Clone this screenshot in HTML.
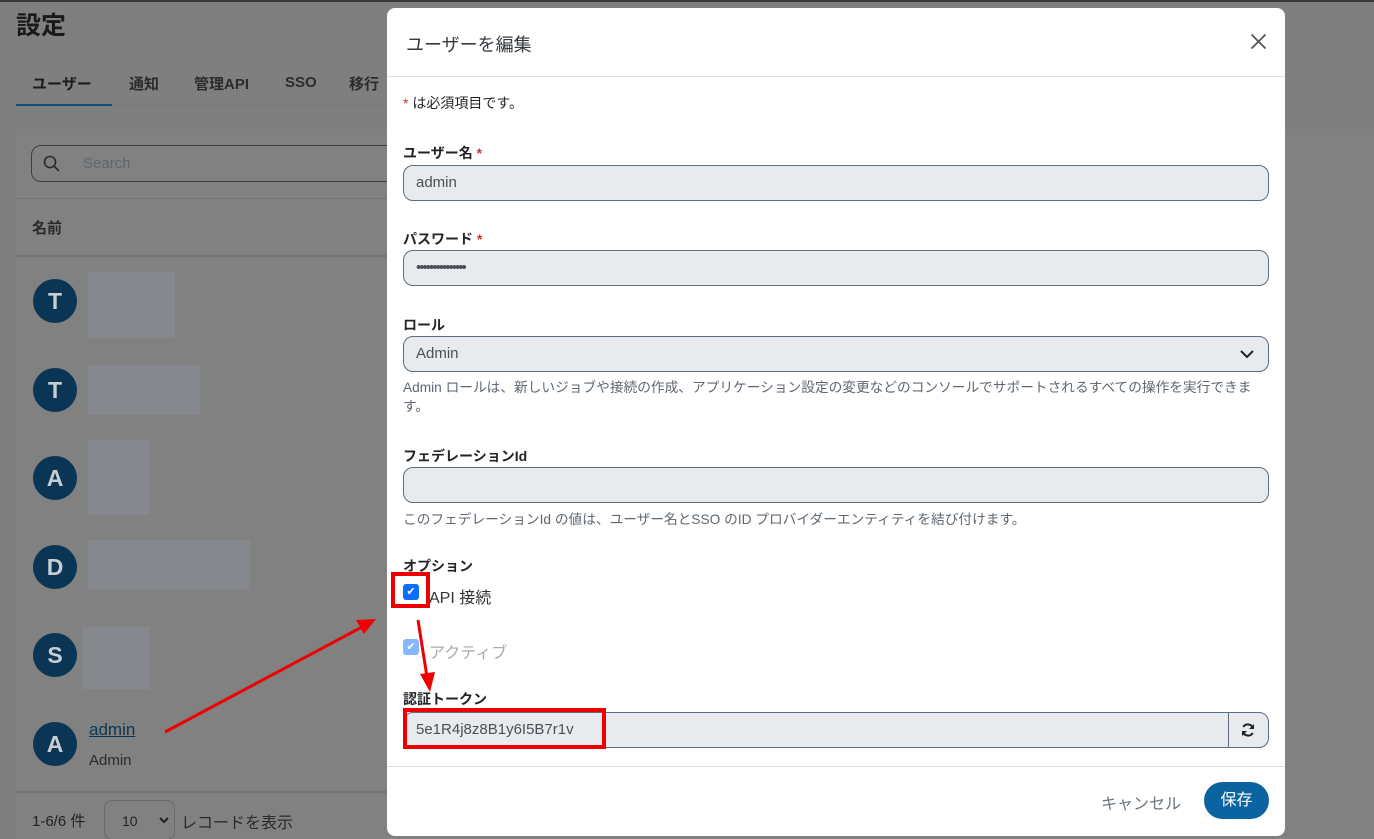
<!DOCTYPE html>
<html><head><meta charset="utf-8"><style>
*{box-sizing:border-box;margin:0;padding:0}
html,body{width:1374px;height:839px;overflow:hidden}
body{background:#7f7f7f;font-family:"Liberation Sans","Noto Sans CJK JP",sans-serif;position:relative;color:#212529}
.abs{position:absolute}
.card{left:16px;top:129px;width:1400px;height:720px;background:#818181;border-radius:8px}
.av{position:absolute;left:33px;width:44px;height:44px;border-radius:50%;background:#0b3554;color:#c9ccd0;font-weight:bold;font-size:23px;text-align:center;line-height:44px}
.blur{position:absolute;background:#85888c}
.modal{left:387px;top:8px;width:898px;height:828px;background:#fff;border-radius:8px}
.lbl{position:absolute;left:16px;font-size:14px;font-weight:bold;color:#212529}
.inp{position:absolute;left:16px;width:866px;height:36px;background:#e8ebee;border:1px solid #5d6d7c;border-radius:10px;font-size:15px;color:#495057;padding-left:12px;line-height:34px}
.help{position:absolute;left:16px;font-size:13.7px;color:#5f6870;line-height:19px;white-space:nowrap}
.req{color:#d0312d}
.cb{position:absolute;width:16px;height:16px;border-radius:3px;background:#0d6efd;color:#fff;font-size:11px;text-align:center;line-height:16px}
</style></head><body>
<div class="abs" style="left:0;top:0;width:1374px;height:2px;background:#3a3a3a"></div>
<div class="abs" style="left:16px;top:6px;font-size:25px;font-weight:bold;color:#1a1a1a">設定</div>
<div class="abs" style="left:32px;top:73px;font-size:15px;font-weight:bold;color:#1c1c1c">ユーザー</div>
<div class="abs" style="left:129px;top:73px;font-size:15px;font-weight:bold;color:#2c2c2c">通知</div>
<div class="abs" style="left:194px;top:73px;font-size:15px;font-weight:bold;color:#2c2c2c">管理API</div>
<div class="abs" style="left:285px;top:74px;font-size:15px;font-weight:bold;color:#2c2c2c">SSO</div>
<div class="abs" style="left:349px;top:73px;font-size:15px;font-weight:bold;color:#2c2c2c">移行</div>
<div class="abs" style="left:16px;top:105px;width:380px;height:1px;background:#777"></div>
<div class="abs" style="left:16px;top:104px;width:96px;height:2px;background:#0e4f7d"></div>
<div class="abs card"></div>
<div class="abs" style="left:31px;top:145px;width:370px;height:37px;border:1px solid #3e3e3e;border-radius:10px"></div>
<svg class="abs" style="left:43px;top:155px" width="18" height="18" viewBox="0 0 18 18"><circle cx="7" cy="7" r="5.5" fill="none" stroke="#2a2a2a" stroke-width="1.6"/><line x1="11" y1="11" x2="16" y2="16" stroke="#2a2a2a" stroke-width="1.6"/></svg>
<div class="abs" style="left:83px;top:155px;font-size:15px;color:#5f666c">Search</div>
<div class="abs" style="left:16px;top:198px;width:380px;height:1px;background:#747474"></div>
<div class="abs" style="left:32px;top:217px;font-size:15px;font-weight:bold;color:#2a2a2a">名前</div>
<div class="abs" style="left:16px;top:255px;width:380px;height:2px;background:#747474"></div>
<div class="av" style="top:279px">T</div><div class="blur" style="left:88px;top:272px;width:87px;height:66px"></div>
<div class="av" style="top:368px">T</div><div class="blur" style="left:88px;top:365px;width:112px;height:50px"></div>
<div class="av" style="top:456px">A</div><div class="blur" style="left:88px;top:440px;width:62px;height:75px"></div>
<div class="av" style="top:545px">D</div><div class="blur" style="left:88px;top:540px;width:162px;height:50px"></div>
<div class="av" style="top:633px">S</div><div class="blur" style="left:83px;top:627px;width:67px;height:62px"></div>
<div class="av" style="top:722px">A</div>
<div class="abs" style="left:89px;top:720px;font-size:17px;color:#0b3554;text-decoration:underline">admin</div>
<div class="abs" style="left:89px;top:752px;font-size:15px;color:#2a2a2a">Admin</div>
<div class="abs" style="left:16px;top:791px;width:380px;height:2px;background:#747474"></div>
<div class="abs" style="left:32px;top:810px;font-size:15px;color:#222">1-6/6 件</div>
<div class="abs" style="left:104px;top:800px;width:71px;height:40px;border:1px solid #6a6a6a;border-radius:8px;font-size:14px;color:#222;padding:12px 0 0 17px">10<svg style="position:absolute;left:54px;top:16px" width="10" height="7" viewBox="0 0 10 7"><path d="M1 1L5 5L9 1" fill="none" stroke="#222" stroke-width="2"/></svg></div>
<div class="abs" style="left:181px;top:809px;font-size:16px;color:#2a2a2a">レコードを表示</div>

<div class="abs modal">
 <div class="abs" style="left:19px;top:23px;font-size:18px;color:#343a40">ユーザーを編集</div>
 <svg class="abs" style="left:863px;top:25px" width="17" height="17" viewBox="0 0 17 17"><path d="M1.5 1.5L15.5 15.5M15.5 1.5L1.5 15.5" stroke="#555" stroke-width="1.8"/></svg>
 <div class="abs" style="left:0;top:68px;width:898px;height:1px;background:#dee2e6"></div>
 <div class="help" style="top:86px;font-size:14px;color:#212529"><span class="req">*</span> は必須項目です。</div>
 <div class="lbl" style="top:135px">ユーザー名 <span class="req">*</span></div>
 <div class="inp" style="top:157px">admin</div>
 <div class="lbl" style="top:221px">パスワード <span class="req">*</span></div>
 <div class="inp" style="top:242px;font-size:15px;letter-spacing:-2px">•••••••••••••••</div>
 <div class="lbl" style="top:307px">ロール</div>
 <div class="inp" style="top:328px">Admin<svg style="position:absolute;right:14px;top:12px" width="14" height="10" viewBox="0 0 14 10"><path d="M1 2L7 8L13 2" fill="none" stroke="#222" stroke-width="2"/></svg></div>
 <div class="help" style="top:370px">Admin ロールは、新しいジョブや接続の作成、アプリケーション設定の変更などのコンソールでサポートされるすべての操作を実行できま<br>す。</div>
 <div class="lbl" style="top:438px">フェデレーションId</div>
 <div class="inp" style="top:459px"></div>
 <div class="help" style="top:502px">このフェデレーションId の値は、ユーザー名とSSO のID プロバイダーエンティティを結び付けます。</div>
 <div class="lbl" style="top:548px">オプション</div>
 <div class="cb" style="left:16px;top:576px">✔</div>
 <div class="abs" style="left:42px;top:576px;font-size:16px;color:#333">API 接続</div>
 <div class="cb" style="left:16px;top:631px;background:#86b7fe">✔</div>
 <div class="abs" style="left:42px;top:631px;font-size:16px;color:#aaa">アクティブ</div>
 <div class="lbl" style="top:681px">認証トークン</div>
 <div class="inp" style="top:704px;border-radius:10px">5e1R4j8z8B1y6I5B7r1v<div style="position:absolute;left:824px;top:0;width:1px;height:34px;background:#5d6d7c"></div><svg style="position:absolute;left:836px;top:9px" width="16" height="16" viewBox="0 0 16 16"><path d="M13 6A5.5 5.5 0 0 0 3.2 5M3 10a5.5 5.5 0 0 0 9.8 1" fill="none" stroke="#222" stroke-width="2"/><path d="M14 2v5h-5zM2 14V9h5z" fill="#222"/></svg></div>
 <div class="abs" style="left:0;top:758px;width:898px;height:1px;background:#dee2e6"></div>
 <div class="abs" style="left:714px;top:782px;font-size:16px;color:#6c757d">キャンセル</div>
 <div class="abs" style="left:817px;top:774px;width:65px;height:37px;border-radius:19px;background:#0b64a0;color:#fff;font-size:16px;text-align:center;line-height:37px">保存</div>
</div>
<div class="abs" style="left:391px;top:572px;width:39px;height:36px;border:4px solid #e00"></div>
<div class="abs" style="left:403px;top:708px;width:203px;height:41px;border:4px solid #e00"></div>
<svg class="abs" style="left:0;top:0" width="1374" height="839"><line x1="165" y1="732" x2="362" y2="627" stroke="#e00" stroke-width="3"/><polygon points="376,619 356,620 364,634" fill="#e00"/><line x1="418" y1="620" x2="427" y2="677" stroke="#e00" stroke-width="3"/><polygon points="430,692 420,674 435,672" fill="#e00"/></svg>
</body></html>
